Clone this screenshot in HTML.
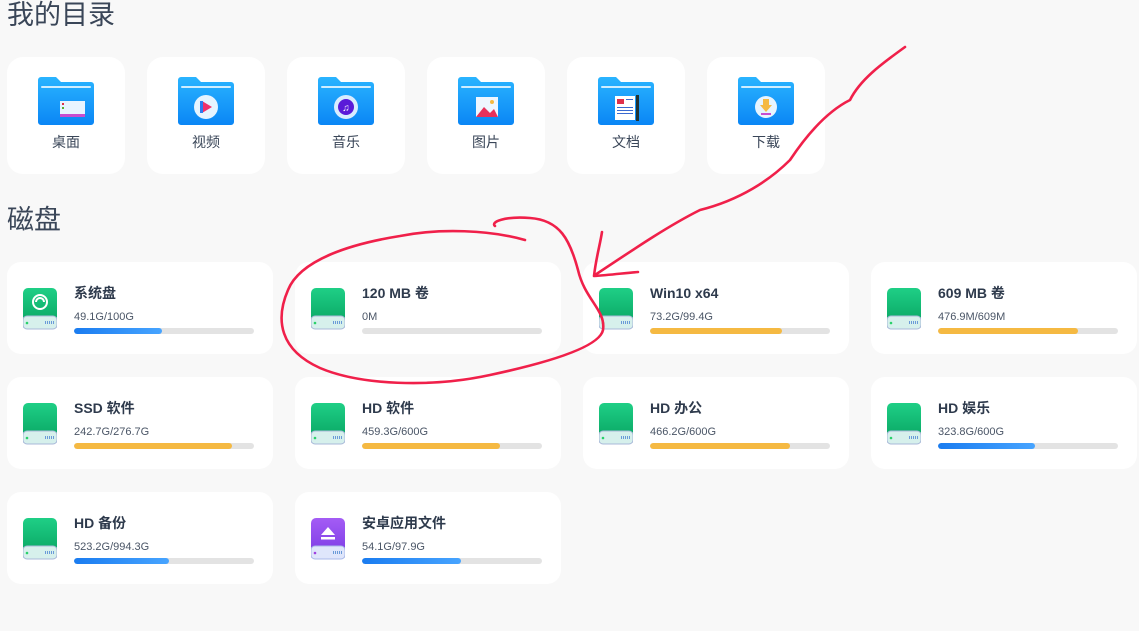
<!DOCTYPE html><html style="background:#f8f8f8"><head><meta charset="utf-8"><style>
body{margin:0;width:1139px;height:631px;background:#f8f8f8;font-family:"Liberation Sans","Noto Sans CJK SC",sans-serif;position:relative;overflow:hidden}
h2{position:absolute;left:7px;margin:0;font-size:27px;font-weight:400;color:#3a4658;line-height:34px}
.t{position:absolute;top:57px;width:118px;height:117px;background:#fff;border-radius:16px}
.t svg{position:absolute;left:31px;top:20px}
.t span{position:absolute;top:75px;width:100%;text-align:center;font-size:14px;color:#3a4658}
.c{position:absolute;width:266px;height:92px;background:#fff;border-radius:14px}
.c .ic{position:absolute;left:16px;top:26px}
.c b{position:absolute;left:67px;top:21px;font-size:14px;line-height:20px;color:#2e3a4c}
.c i{position:absolute;left:67px;top:48px;font-size:11px;line-height:14px;font-style:normal;color:#4a5566}
.c .bar{position:absolute;left:67px;top:66px;width:180px;height:6px;border-radius:3px;background:#e3e3e3;overflow:hidden}
.bar u{display:block;height:100%;border-radius:3px}
.bl{background:linear-gradient(90deg,#1a7cf0,#47a4ff)}
.or{background:#f5b942}
</style></head><body>
<h2 style="top:-2px">我的目录</h2>
<h2 style="top:203px">磁盘</h2>

<svg width="0" height="0" style="position:absolute"><defs>
<linearGradient id="fg" x1="0" y1="0" x2="0" y2="1"><stop offset="0" stop-color="#2ab4ff"/><stop offset="1" stop-color="#0a86f5"/></linearGradient>
<linearGradient id="gg" x1="0" y1="0" x2="0" y2="1"><stop offset="0" stop-color="#1fcf86"/><stop offset="1" stop-color="#0aa865"/></linearGradient>
<linearGradient id="pg" x1="0" y1="0" x2="0" y2="1"><stop offset="0" stop-color="#a45cf5"/><stop offset="1" stop-color="#7f3fe6"/></linearGradient>
<symbol id="fold" viewBox="0 0 56 48"><path d="M3 0h15l5 5h30a3 3 0 0 1 3 3v37a3 3 0 0 1-3 3H3a3 3 0 0 1-3-3V3a3 3 0 0 1 3-3z" fill="url(#fg)"/><rect x="3" y="9" width="50" height="2" rx="1" fill="#cfeeff"/></symbol>
<symbol id="drv" viewBox="0 0 34 42"><rect x="0" y="0" width="34" height="34" rx="5" fill="url(#gg)"/><rect x="0" y="28" width="34" height="13" rx="4" fill="#d6f0ec" stroke="#a8b8d8"/><circle cx="4" cy="35" r="1.3" fill="#2ad16a"/><g fill="#6a9ad8"><rect x="22" y="33" width="1" height="3"/><rect x="24" y="33" width="1" height="3"/><rect x="26" y="33" width="1" height="3"/><rect x="28" y="33" width="1" height="3"/><rect x="30" y="33" width="1" height="3"/></g></symbol>
</defs></svg>

<div class="t" style="left:7px"><svg width="56" height="48"><use href="#fold"/><rect x="22" y="24" width="25" height="16" fill="#e8f4ff"/><rect x="22" y="37" width="25" height="3" fill="#c84dd0"/><rect x="24" y="26" width="2" height="2" fill="#e0304a"/><rect x="24" y="30" width="2" height="2" fill="#5ab030"/></svg><span>桌面</span></div>
<div class="t" style="left:147px"><svg width="56" height="48"><use href="#fold"/><circle cx="28" cy="30" r="12" fill="#e6f4ff"/><path d="M24 24l10 6-10 6z" fill="#f0306a"/><rect x="22" y="24" width="3" height="12" fill="#2a7cf0"/></svg><span>视频</span></div>
<div class="t" style="left:287px"><svg width="56" height="48"><use href="#fold"/><circle cx="28" cy="30" r="12" fill="#d8ecff"/><circle cx="28" cy="30" r="8" fill="#5a1ad8"/><text x="28" y="34" font-size="10" fill="#fff" text-anchor="middle">♫</text></svg><span>音乐</span></div>
<div class="t" style="left:427px"><svg width="56" height="48"><use href="#fold"/><rect x="18" y="20" width="22" height="20" fill="#eef6ff"/><path d="M18 40l8-10 6 6 4-4 4 8z" fill="#e8305a"/><circle cx="34" cy="25" r="2" fill="#f5b942"/></svg><span>图片</span></div>
<div class="t" style="left:567px"><svg width="56" height="48"><use href="#fold"/><rect x="17" y="19" width="20" height="24" fill="#fff"/><rect x="19" y="22" width="7" height="5" fill="#e0304a"/><g fill="#3a6ad0"><rect x="28" y="22" width="7" height="1"/><rect x="19" y="30" width="16" height="1"/><rect x="19" y="33" width="16" height="1"/><rect x="19" y="36" width="16" height="1"/></g><rect x="38" y="18" width="3" height="26" fill="#233"/></svg><span>文档</span></div>
<div class="t" style="left:707px"><svg width="56" height="48"><use href="#fold"/><circle cx="28" cy="30" r="11" fill="#e6f4ff"/><path d="M25 22h6v6h3l-6 7-6-7h3z" fill="#f5b942"/><rect x="23" y="36" width="10" height="2" fill="#c84dd0"/></svg><span>下载</span></div>

<div class="c" style="left:7px;top:262px"><svg class="ic" width="34" height="42"><use href="#drv"/><circle cx="17" cy="14" r="7" fill="none" stroke="#fff" stroke-width="2"/><path d="M13 14a4 4 0 0 1 8 0" stroke="#fff" stroke-width="2" fill="none"/></svg><b>系统盘</b><i>49.1G/100G</i><div class="bar"><u class="bl" style="width:49%"></u></div></div>
<div class="c" style="left:295px;top:262px"><svg class="ic" width="34" height="42"><use href="#drv"/></svg><b>120 MB 卷</b><i>0M</i><div class="bar"></div></div>
<div class="c" style="left:583px;top:262px"><svg class="ic" width="34" height="42"><use href="#drv"/></svg><b>Win10 x64</b><i>73.2G/99.4G</i><div class="bar"><u class="or" style="width:73.6%"></u></div></div>
<div class="c" style="left:871px;top:262px"><svg class="ic" width="34" height="42"><use href="#drv"/></svg><b>609 MB 卷</b><i>476.9M/609M</i><div class="bar"><u class="or" style="width:78%"></u></div></div>

<div class="c" style="left:7px;top:377px"><svg class="ic" width="34" height="42"><use href="#drv"/></svg><b>SSD 软件</b><i>242.7G/276.7G</i><div class="bar"><u class="or" style="width:87.7%"></u></div></div>
<div class="c" style="left:295px;top:377px"><svg class="ic" width="34" height="42"><use href="#drv"/></svg><b>HD 软件</b><i>459.3G/600G</i><div class="bar"><u class="or" style="width:76.5%"></u></div></div>
<div class="c" style="left:583px;top:377px"><svg class="ic" width="34" height="42"><use href="#drv"/></svg><b>HD 办公</b><i>466.2G/600G</i><div class="bar"><u class="or" style="width:77.7%"></u></div></div>
<div class="c" style="left:871px;top:377px"><svg class="ic" width="34" height="42"><use href="#drv"/></svg><b>HD 娱乐</b><i>323.8G/600G</i><div class="bar"><u class="bl" style="width:54%"></u></div></div>

<div class="c" style="left:7px;top:492px"><svg class="ic" width="34" height="42"><use href="#drv"/></svg><b>HD 备份</b><i>523.2G/994.3G</i><div class="bar"><u class="bl" style="width:52.6%"></u></div></div>
<div class="c" style="left:295px;top:492px"><svg class="ic" width="34" height="42"><rect x="0" y="0" width="34" height="34" rx="5" fill="url(#pg)"/><path d="M17 9l7 8H10z" fill="#fff"/><rect x="10" y="19" width="14" height="2.5" fill="#fff"/><rect x="0" y="28" width="34" height="13" rx="4" fill="#dfe6fb" stroke="#a8b8e8"/><circle cx="4" cy="35" r="1.3" fill="#a040e0"/><g fill="#6a9ad8"><rect x="22" y="33" width="1" height="3"/><rect x="24" y="33" width="1" height="3"/><rect x="26" y="33" width="1" height="3"/><rect x="28" y="33" width="1" height="3"/><rect x="30" y="33" width="1" height="3"/></g></svg><b>安卓应用文件</b><i>54.1G/97.9G</i><div class="bar"><u class="bl" style="width:55%"></u></div></div>

<svg width="1139" height="631" style="position:absolute;left:0;top:0;pointer-events:none" fill="none" stroke="#f0204a" stroke-width="2.6" stroke-linecap="round" stroke-linejoin="round">
<path d="M525 240C490 230 440 228 400 236C350 244 300 260 288 290C275 320 280 350 320 368C360 385 430 388 490 375C560 360 600 345 603 330C606 310 585 300 578 270C570 240 560 220 530 218C505 216 490 222 495 226"/>
<path d="M905 47C880 65 860 80 850 100C830 110 810 130 790 160C770 180 740 200 700 210C670 225 640 245 595 275"/>
<path d="M602 232C600 245 596 258 594 276C610 275 625 273 638 272"/>
</svg>
</body></html>
